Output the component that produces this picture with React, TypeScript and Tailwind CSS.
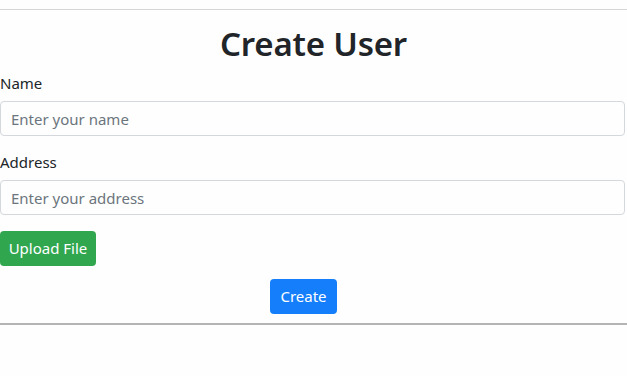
export default function App() {
  return (
    <div className="h-[376px] bg-[#fdfefd] pt-[9px] font-['Noto_Sans',sans-serif] text-[#212529]">
      <div className="border-t border-[#d6d6d6] border-b-2 border-b-[#b4b4b4] pb-[9px]">
        <h1 className="pt-[14px] text-center text-[33px] leading-[40px] font-semibold tracking-[-0.2px]">Create User</h1>

        <form className="pr-[2px]" onSubmit={(e) => e.preventDefault()}>
          <label className="block mt-[9px] text-[15px] leading-[20px]">Name</label>
          <input
            type="text"
            placeholder="Enter your name"
            className="mt-[8px] block h-[35px] w-full rounded-[4px] border border-[#d4d8dc] bg-[#fdfefd] px-[10px] text-[15px] placeholder:text-[#6c757d] outline-none"
          />

          <label className="block mt-[16px] text-[15px] leading-[20px]">Address</label>
          <input
            type="text"
            placeholder="Enter your address"
            className="mt-[8px] block h-[35px] w-full rounded-[4px] border border-[#d4d8dc] bg-[#fdfefd] px-[10px] text-[15px] placeholder:text-[#6c757d] outline-none"
          />

          <button
            type="button"
            className="mt-[16px] block h-[35px] w-[96px] rounded-[4px] bg-[#30a64f] text-[15px] text-white"
          >
            Upload File
          </button>

          <div className="mt-[13px] flex justify-center pr-[18px]">
            <button type="submit" className="h-[35px] w-[67px] rounded-[4px] bg-[#157efb] text-[15px] text-white">
              Create
            </button>
          </div>
        </form>
      </div>
    </div>
  );
}
